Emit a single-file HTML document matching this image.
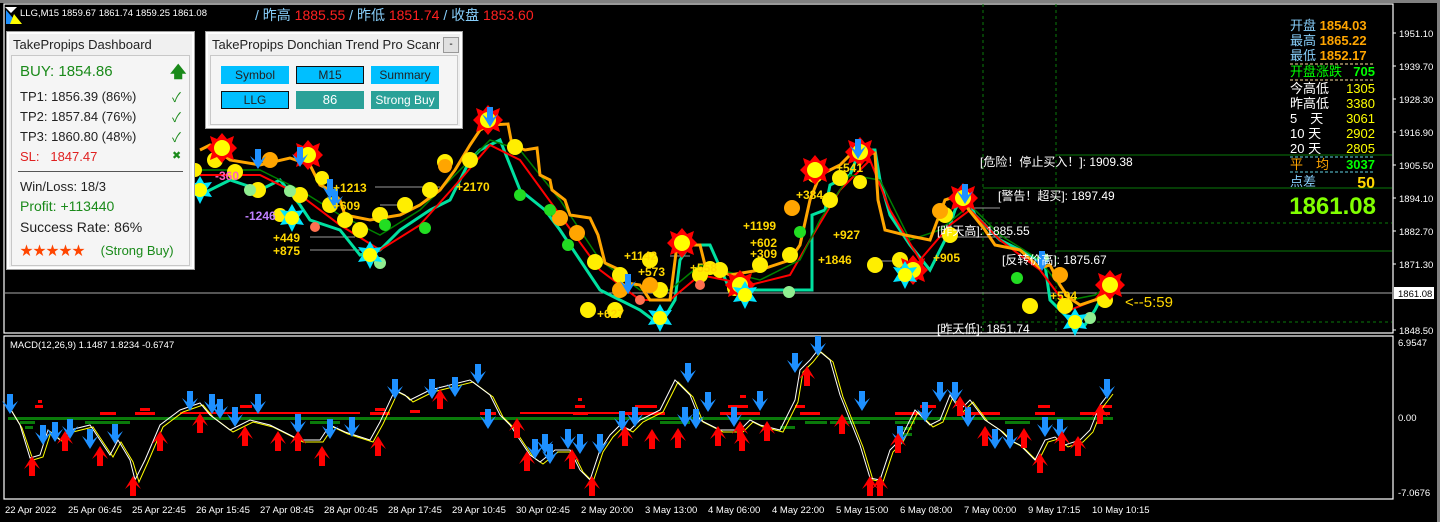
<!DOCTYPE html>
<html><head><meta charset="utf-8"><style>
html,body{margin:0;padding:0;background:#000;width:1440px;height:522px;overflow:hidden}
body{position:relative;font-family:"Liberation Sans","Noto Sans CJK SC",sans-serif}
svg{position:absolute;left:0;top:0}
.panel{position:absolute;background:#f0f0f0;border:1px solid #a0a0a0;box-shadow:inset 0 0 0 2px #fff}
.dash{left:6px;top:31px;width:187px;height:237px}
.dash .t{position:absolute;left:6px;top:5px;font-size:13px;color:#222}
.dash .in{position:absolute;left:4px;top:23px;width:177px;height:209px;border:1px solid #c8c8c8;background:#f5f5f5}
.row{position:absolute;left:8px;font-size:13px;color:#222;white-space:nowrap}
.scan{left:205px;top:31px;width:256px;height:96px}
.scan .t{position:absolute;left:6px;top:5px;font-size:13px;color:#222;white-space:nowrap;width:228px;overflow:hidden}
.scan .min{position:absolute;left:237px;top:5px;width:14px;height:14px;background:#e0e0e0;border:1px solid #999;font-size:10px;text-align:center;line-height:13px}
.scan .in{position:absolute;left:4px;top:23px;width:246px;height:68px;border:1px solid #c8c8c8;background:#f5f5f5}
.b{position:absolute;width:68px;height:18px;font-size:12px;text-align:center;line-height:18px;color:#222;background:#00bfff}
.g{background:#2aa198;color:#fff}
.k{border:1px solid #111;width:66px;height:16px;line-height:16px}
</style></head><body>
<svg width="1440" height="522" viewBox="0 0 1440 522" font-family="Liberation Sans, Noto Sans CJK SC, sans-serif">
<defs>
<g id="dn"><polygon points="-3,-11 3,-11 3,0 8,-4 0,9 -8,-4 -3,0" fill="#1e90ff"/></g>
<g id="up"><polygon points="-3,11 3,11 3,0 8,4 0,-9 -8,4 -3,0" fill="#ff0000"/></g>
<g id="sun"><polygon points="0,-15 5,-9 12,-12 10,-5 15,0 10,5 12,12 5,9 0,15 -5,9 -12,12 -10,5 -15,0 -10,-5 -12,-12 -5,-9" fill="#f00"/><circle r="8" fill="#ff0"/></g>
<g id="star"><polygon points="0,-14 4,-7 12,-8 7,-1 12,7 4,6 0,14 -4,6 -12,7 -7,-1 -12,-8 -4,-7" fill="#00e5ff"/><circle r="7" fill="#ff0"/></g>
</defs>
<rect x="0" y="0" width="1440" height="3" fill="#808080"/>
<rect x="1437" y="0" width="3" height="522" fill="#808080"/>
<rect x="4" y="4" width="1389" height="329" fill="none" stroke="#fff" stroke-width="1.2"/>
<rect x="4" y="336" width="1389" height="163" fill="none" stroke="#fff" stroke-width="1.2"/>
<line x1="983" y1="4" x2="983" y2="333" stroke="#0a7a0a" stroke-dasharray="3,3"/>
<line x1="1056" y1="4" x2="1056" y2="333" stroke="#0a7a0a" stroke-dasharray="3,3"/>
<line x1="1056" y1="155" x2="1392" y2="155" stroke="#0a7a0a"/>
<line x1="983" y1="188" x2="1392" y2="188" stroke="#0a7a0a"/>
<line x1="983" y1="223" x2="1392" y2="223" stroke="#0a7a0a" stroke-dasharray="3,3"/>
<line x1="1056" y1="251" x2="1392" y2="251" stroke="#0a7a0a"/>
<line x1="983" y1="322" x2="1392" y2="322" stroke="#0a7a0a" stroke-dasharray="3,3"/>
<line x1="5" y1="293" x2="1392" y2="293" stroke="#aaa"/>
<g stroke="#999"><line x1="375" y1="187" x2="440" y2="187"/><line x1="380" y1="205" x2="410" y2="205"/><line x1="310" y1="237" x2="355" y2="237"/><line x1="310" y1="250" x2="380" y2="250"/><line x1="670" y1="256" x2="690" y2="256"/><line x1="870" y1="261" x2="900" y2="261"/><line x1="960" y1="208" x2="1000" y2="208"/><line x1="940" y1="237" x2="1010" y2="237"/></g>
<polyline fill="none" stroke="#00e0a0" stroke-width="3" points="180,190 200,195 230,180 260,190 280,180 300,205 310,220 340,230 360,255 380,250 400,230 430,210 450,200 470,160 480,150 500,140 520,190 545,210 560,230 580,260 600,290 620,300 640,310 660,325 675,300 680,260 690,245 710,245 730,290 760,290 790,290 812,290 812,215 825,210 830,185 850,175 860,150 875,150 880,180 890,215 910,245 930,270 945,240 955,210 965,190 975,215 1000,240 1030,255 1045,265 1050,300 1070,320 1085,325 1095,310 1105,290 1110,280"/>
<polyline fill="none" stroke="#f00" stroke-width="2" points="200,175 260,175 300,195 340,225 380,250 420,225 460,180 490,145 520,160 560,215 600,270 640,300 670,300 700,275 750,285 790,275 810,240 840,190 870,160 890,210 920,260 950,225 970,210 1000,240 1040,270 1070,310 1095,300 1110,280"/>
<polyline fill="none" stroke="#008000" stroke-width="1.5" points="200,170 260,170 300,190 340,215 380,235 420,210 460,170 490,140 520,150 560,200 600,260 640,290 670,290 700,265 760,280 800,260 820,220 850,175 880,180 910,240 940,230 970,205 1000,235 1040,260 1070,300 1095,295 1110,285"/>
<polyline fill="none" stroke="#ffa500" stroke-width="3" points="200,150 210,145 230,160 260,165 290,158 310,165 320,185 330,190 340,200 345,215 370,220 400,215 420,205 440,190 455,170 470,145 480,130 490,125 508,124 512,145 525,150 537,148 540,175 550,180 552,190 565,200 570,215 590,218 598,235 605,263 620,270 627,283 640,285 650,300 670,300 677,245 700,245 705,265 730,275 760,270 790,260 800,245 810,200 820,175 830,170 840,165 850,155 875,153 878,200 885,230 905,235 930,240 945,200 960,195 965,205 985,230 995,245 1020,250 1040,268 1050,265 1060,285 1068,297 1080,305 1095,300 1105,298"/>
<g fill="#ffee00">
<circle cx="215" cy="160" r="8"/><circle cx="235" cy="172" r="8"/><circle cx="258" cy="190" r="8"/><circle cx="300" cy="195" r="8"/><circle cx="330" cy="205" r="8"/><circle cx="345" cy="220" r="8"/><circle cx="360" cy="230" r="8"/><circle cx="380" cy="215" r="8"/><circle cx="405" cy="205" r="8"/><circle cx="430" cy="190" r="8"/><circle cx="445" cy="162" r="8"/><circle cx="470" cy="160" r="8"/><circle cx="515" cy="147" r="8"/><circle cx="595" cy="262" r="8"/><circle cx="588" cy="310" r="8"/><circle cx="620" cy="275" r="8"/><circle cx="650" cy="260" r="8"/><circle cx="700" cy="275" r="8"/><circle cx="720" cy="270" r="8"/><circle cx="735" cy="288" r="8"/><circle cx="760" cy="265" r="8"/><circle cx="790" cy="255" r="8"/><circle cx="815" cy="175" r="8"/><circle cx="840" cy="178" r="8"/><circle cx="830" cy="200" r="8"/><circle cx="875" cy="265" r="8"/><circle cx="900" cy="260" r="8"/><circle cx="945" cy="215" r="8"/><circle cx="950" cy="235" r="8"/><circle cx="1030" cy="306" r="8"/><circle cx="1105" cy="300" r="8"/><circle cx="1065" cy="306" r="8"/><circle cx="615" cy="310" r="8"/><circle cx="660" cy="290" r="8"/><circle cx="322" cy="178" r="7"/><circle cx="195" cy="170" r="7"/><circle cx="280" cy="215" r="7"/><circle cx="710" cy="268" r="7"/><circle cx="860" cy="182" r="7"/>
</g>
<g fill="#ffa500"><circle cx="270" cy="160" r="8"/><circle cx="560" cy="218" r="8"/><circle cx="577" cy="233" r="8"/><circle cx="620" cy="290" r="8"/><circle cx="650" cy="285" r="8"/><circle cx="792" cy="208" r="8"/><circle cx="1060" cy="275" r="8"/><circle cx="940" cy="211" r="8"/><circle cx="445" cy="166" r="7"/></g>
<g fill="#22dd22"><circle cx="520" cy="195" r="6"/><circle cx="550" cy="210" r="6"/><circle cx="568" cy="245" r="6"/><circle cx="800" cy="232" r="6"/><circle cx="1017" cy="278" r="6"/><circle cx="385" cy="225" r="6"/><circle cx="425" cy="228" r="6"/></g>
<g fill="#90ee90"><circle cx="290" cy="191" r="6"/><circle cx="250" cy="190" r="6"/><circle cx="789" cy="292" r="6"/><circle cx="1090" cy="318" r="6"/><circle cx="380" cy="263" r="6"/><circle cx="1043" cy="259" r="6"/></g>
<g fill="#ff7050"><circle cx="315" cy="227" r="5"/><circle cx="640" cy="300" r="5"/><circle cx="700" cy="285" r="5"/></g>
<use href="#sun" x="488" y="120"/><use href="#sun" x="682" y="243"/><use href="#sun" x="815" y="170"/><use href="#sun" x="860" y="152"/><use href="#sun" x="963" y="198"/><use href="#sun" x="1110" y="285"/><use href="#sun" x="222" y="148"/><use href="#sun" x="308" y="155"/><use href="#sun" x="913" y="270"/><use href="#sun" x="740" y="285"/>
<use href="#star" x="370" y="255"/><use href="#star" x="200" y="190"/><use href="#star" x="660" y="318"/><use href="#star" x="745" y="295"/><use href="#star" x="1075" y="322"/><use href="#star" x="905" y="275"/><use href="#star" x="292" y="218"/>
<use href="#dn" x="490" y="118"/><use href="#dn" x="258" y="160"/><use href="#dn" x="300" y="158"/><use href="#dn" x="330" y="190"/><use href="#dn" x="628" y="285"/><use href="#dn" x="858" y="150"/><use href="#dn" x="965" y="195"/><use href="#dn" x="1042" y="262"/><use href="#dn" x="335" y="200"/>
<g font-size="12" font-weight="bold" fill="#ffd700">
<text x="333" y="192">+1213</text><text x="333" y="210">+609</text><text x="273" y="242">+449</text><text x="273" y="255">+875</text><text x="456" y="191">+2170</text><text x="624" y="260">+1142</text><text x="638" y="276">+573</text><text x="597" y="318">+627</text><text x="743" y="230">+1199</text><text x="750" y="247">+602</text><text x="750" y="258">+309</text><text x="818" y="264">+1846</text><text x="833" y="239">+927</text><text x="796" y="199">+384</text><text x="933" y="262">+905</text><text x="1050" y="300">+594</text><text x="690" y="272">+558</text><text x="836" y="172">+541</text>
</g>
<text x="245" y="220" font-size="12" font-weight="bold" fill="#c080ff">-1246</text>
<text x="215" y="180" font-size="12" font-weight="bold" fill="#ff60c0">-360</text>
<g font-size="12" fill="#fff"><text x="980" y="166">[危险！停止买入！]: 1909.38</text><text x="998" y="200">[警告！超买]: 1897.49</text><text x="937" y="235">[昨天高]: 1885.55</text><text x="1002" y="264">[反转价高]: 1875.67</text><text x="937" y="333">[昨天低]: 1851.74</text></g>
<text x="1125" y="307" font-size="15" fill="#ffd700">&lt;--5:59</text>
<polygon points="5,7 17,7 11,13" fill="#fff"/><polygon points="6,10 18,24 6,24" fill="#1e90ff"/><polygon points="14,14 22,24 10,24" fill="#ff0"/>
<text x="20" y="16" font-size="9.5" fill="#fff">LLG,M15  1859.67 1861.74 1859.25 1861.08</text>
<text x="255" y="20" font-size="14" fill="#87cefa">/ 昨高 <tspan fill="#ff2020">1885.55</tspan> / 昨低 <tspan fill="#ff2020">1851.74</tspan> / 收盘 <tspan fill="#ff2020">1853.60</tspan></text>
<g font-size="13"><text x="1290" y="30" fill="#87cefa">开盘 <tspan fill="#ffa500" font-weight="bold">1854.03</tspan></text>
<text x="1290" y="45" fill="#87cefa">最高 <tspan fill="#ffa500" font-weight="bold">1865.22</tspan></text>
<text x="1290" y="60" fill="#87cefa">最低 <tspan fill="#ffa500" font-weight="bold">1852.17</tspan></text>
<line x1="1290" y1="64" x2="1375" y2="64" stroke="#ffe0a0" stroke-dasharray="3,2"/>
<text x="1290" y="76" fill="#00ff00">开盘涨跌</text><text x="1375" y="76" fill="#00ff00" font-weight="bold" text-anchor="end">705</text>
<line x1="1290" y1="80" x2="1375" y2="80" stroke="#ffe0a0" stroke-dasharray="3,2"/>
<g fill="#fff"><text x="1290" y="93">今高低</text><text x="1290" y="108">昨高低</text><text x="1290" y="123">5　天</text><text x="1290" y="138">10 天</text><text x="1290" y="153">20 天</text></g>
<g fill="#ffff00" text-anchor="end"><text x="1375" y="93">1305</text><text x="1375" y="108">3380</text><text x="1375" y="123">3061</text><text x="1375" y="138">2902</text><text x="1375" y="153">2805</text></g>
<line x1="1290" y1="157" x2="1375" y2="157" stroke="#5fd0e0" stroke-dasharray="3,2"/>
<text x="1290" y="169" fill="#ffa500">平　均</text><text x="1375" y="169" fill="#00ff00" font-weight="bold" text-anchor="end">3037</text>
<line x1="1290" y1="172" x2="1375" y2="172" stroke="#5fd0e0" stroke-dasharray="3,2"/>
<text x="1290" y="186" fill="#87cefa">点差</text><text x="1375" y="188" fill="#ffd700" font-weight="bold" font-size="16" text-anchor="end">50</text></g>
<text x="1376" y="214" font-size="24" font-weight="bold" fill="#80ff00" text-anchor="end">1861.08</text>
<g font-size="9.5" fill="#fff"><text x="1399" y="37">1951.10</text><text x="1399" y="70">1939.70</text><text x="1399" y="103">1928.30</text><text x="1399" y="136">1916.90</text><text x="1399" y="169">1905.50</text><text x="1399" y="202">1894.10</text><text x="1399" y="235">1882.70</text><text x="1399" y="268">1871.30</text><text x="1399" y="334">1848.50</text><text x="1398" y="346">6.9547</text><text x="1398" y="421">0.00</text><text x="1398" y="496">-7.0676</text></g>
<g stroke="#fff"><line x1="1393" y1="33" x2="1396" y2="33"/><line x1="1393" y1="66" x2="1396" y2="66"/><line x1="1393" y1="99" x2="1396" y2="99"/><line x1="1393" y1="132" x2="1396" y2="132"/><line x1="1393" y1="165" x2="1396" y2="165"/><line x1="1393" y1="198" x2="1396" y2="198"/><line x1="1393" y1="231" x2="1396" y2="231"/><line x1="1393" y1="264" x2="1396" y2="264"/><line x1="1393" y1="330" x2="1396" y2="330"/></g>
<rect x="1394" y="287" width="40" height="12" fill="#fff"/><text x="1398" y="297" font-size="9.5" fill="#000">1861.08</text>
<text x="10" y="348" font-size="9.5" fill="#fff">MACD(12,26,9) 1.1487 1.8234 -0.6747</text>
<g fill="#f00"><rect x="35" y="405" width="8" height="3"/><rect x="38" y="400" width="4" height="3"/><rect x="100" y="412" width="16" height="3"/><rect x="135" y="412" width="20" height="3"/><rect x="140" y="408" width="10" height="3"/><rect x="240" y="405" width="12" height="3"/><rect x="370" y="412" width="20" height="3"/><rect x="375" y="408" width="10" height="3"/><rect x="410" y="410" width="10" height="3"/><rect x="480" y="412" width="16" height="3"/><rect x="573" y="412" width="15" height="3"/><rect x="575" y="405" width="10" height="3"/><rect x="578" y="398" width="4" height="3"/><rect x="625" y="412" width="40" height="3"/><rect x="635" y="405" width="22" height="3"/><rect x="720" y="412" width="40" height="3"/><rect x="728" y="405" width="20" height="3"/><rect x="740" y="395" width="6" height="3"/><rect x="800" y="412" width="20" height="3"/><rect x="795" y="405" width="10" height="3"/><rect x="895" y="412" width="30" height="3"/><rect x="920" y="405" width="16" height="3"/><rect x="960" y="412" width="40" height="3"/><rect x="1035" y="412" width="20" height="3"/><rect x="1038" y="405" width="12" height="3"/><rect x="1080" y="412" width="30" height="3"/><rect x="1100" y="405" width="12" height="3"/><rect x="180" y="412" width="180" height="2"/><rect x="520" y="412" width="100" height="2"/></g>
<g fill="#0a7a0a"><rect x="8" y="417" width="1105" height="3"/><rect x="20" y="421" width="15" height="3"/><rect x="25" y="426" width="8" height="3"/><rect x="85" y="421" width="45" height="3"/><rect x="310" y="421" width="30" height="3"/><rect x="660" y="421" width="30" height="3"/><rect x="805" y="421" width="22" height="3"/><rect x="830" y="421" width="40" height="3"/><rect x="780" y="426" width="15" height="3"/><rect x="895" y="421" width="20" height="3"/><rect x="898" y="427" width="14" height="3"/><rect x="900" y="433" width="12" height="3"/><rect x="1005" y="421" width="25" height="3"/></g>
<polyline fill="none" stroke="#ff0" stroke-width="1" points="10,408 22,428 33,460 43,457 51,432 63,442 73,432 93,427 103,442 113,457 121,442 133,462 139,482 148,462 163,427 183,412 203,405 213,417 233,432 253,422 273,427 293,437 303,442 323,442 333,427 348,434 373,442 383,424 398,392 408,397 413,402 433,392 453,387 473,382 493,397 503,417 513,427 523,442 533,457 543,464 558,452 573,452 583,472 593,482 603,452 613,437 623,427 633,432 643,422 663,412 678,382 693,397 703,422 723,432 743,432 753,422 763,427 783,432 798,402 803,372 813,362 821,352 833,362 843,397 853,422 863,447 873,480 883,482 893,452 903,442 918,412 933,427 943,422 953,397 963,412 973,402 988,422 1003,432 1013,442 1023,447 1038,462 1048,442 1058,439 1068,447 1083,442 1093,432 1103,407 1113,394"/>
<polyline fill="none" stroke="#fff" stroke-width="1" points="8,405 20,425 30,458 40,455 48,430 60,440 70,430 90,425 100,440 110,455 118,440 130,460 135,480 145,460 160,425 180,410 200,403 210,415 230,430 250,420 270,425 290,435 300,440 320,440 330,425 345,432 370,440 380,422 395,390 405,395 410,400 430,390 450,385 470,380 490,395 500,415 510,425 520,440 530,455 540,462 555,450 570,450 580,470 590,480 600,450 610,435 620,425 630,430 640,420 660,410 675,380 690,395 700,420 720,430 740,430 750,420 760,425 780,430 795,400 800,370 810,360 818,350 830,360 840,395 850,420 860,445 870,478 880,480 890,450 900,440 915,410 930,425 940,420 950,395 960,410 970,400 985,420 1000,430 1010,440 1020,445 1035,460 1045,440 1055,437 1065,445 1080,440 1090,430 1100,405 1110,392"/>
<g>
<use href="#dn" x="10" y="405"/><use href="#dn" x="43" y="436"/><use href="#dn" x="55" y="433"/><use href="#dn" x="70" y="430"/><use href="#dn" x="90" y="440"/><use href="#dn" x="115" y="435"/><use href="#dn" x="190" y="402"/><use href="#dn" x="212" y="405"/><use href="#dn" x="220" y="410"/><use href="#dn" x="235" y="418"/><use href="#dn" x="258" y="405"/><use href="#dn" x="298" y="425"/><use href="#dn" x="330" y="430"/><use href="#dn" x="352" y="428"/><use href="#dn" x="395" y="390"/><use href="#dn" x="432" y="390"/><use href="#dn" x="455" y="388"/><use href="#dn" x="478" y="375"/><use href="#dn" x="488" y="420"/><use href="#dn" x="535" y="450"/><use href="#dn" x="550" y="455"/><use href="#dn" x="545" y="445"/><use href="#dn" x="568" y="440"/><use href="#dn" x="580" y="445"/><use href="#dn" x="600" y="445"/><use href="#dn" x="622" y="422"/><use href="#dn" x="635" y="418"/><use href="#dn" x="688" y="374"/><use href="#dn" x="708" y="403"/><use href="#dn" x="685" y="418"/><use href="#dn" x="696" y="420"/><use href="#dn" x="734" y="418"/><use href="#dn" x="760" y="402"/><use href="#dn" x="795" y="364"/><use href="#dn" x="818" y="347"/><use href="#dn" x="900" y="437"/><use href="#dn" x="862" y="402"/><use href="#dn" x="925" y="413"/><use href="#dn" x="940" y="393"/><use href="#dn" x="955" y="393"/><use href="#dn" x="968" y="418"/><use href="#dn" x="995" y="440"/><use href="#dn" x="1010" y="440"/><use href="#dn" x="1045" y="428"/><use href="#dn" x="1060" y="430"/><use href="#dn" x="1107" y="390"/>
<use href="#up" x="32" y="465"/><use href="#up" x="65" y="440"/><use href="#up" x="100" y="455"/><use href="#up" x="133" y="485"/><use href="#up" x="160" y="440"/><use href="#up" x="200" y="422"/><use href="#up" x="245" y="435"/><use href="#up" x="278" y="440"/><use href="#up" x="298" y="440"/><use href="#up" x="322" y="455"/><use href="#up" x="378" y="445"/><use href="#up" x="440" y="398"/><use href="#up" x="517" y="427"/><use href="#up" x="527" y="460"/><use href="#up" x="572" y="458"/><use href="#up" x="592" y="485"/><use href="#up" x="625" y="435"/><use href="#up" x="652" y="438"/><use href="#up" x="678" y="437"/><use href="#up" x="718" y="435"/><use href="#up" x="740" y="430"/><use href="#up" x="742" y="440"/><use href="#up" x="767" y="430"/><use href="#up" x="807" y="375"/><use href="#up" x="842" y="423"/><use href="#up" x="870" y="485"/><use href="#up" x="898" y="442"/><use href="#up" x="880" y="485"/><use href="#up" x="985" y="435"/><use href="#up" x="1024" y="437"/><use href="#up" x="1040" y="462"/><use href="#up" x="1062" y="440"/><use href="#up" x="1078" y="445"/><use href="#up" x="1100" y="413"/><use href="#up" x="960" y="405"/>
</g>
<g font-size="9.5" fill="#fff"><text x="5" y="513">22 Apr 2022</text><text x="68" y="513">25 Apr 06:45</text><text x="132" y="513">25 Apr 22:45</text><text x="196" y="513">26 Apr 15:45</text><text x="260" y="513">27 Apr 08:45</text><text x="324" y="513">28 Apr 00:45</text><text x="388" y="513">28 Apr 17:45</text><text x="452" y="513">29 Apr 10:45</text><text x="516" y="513">30 Apr 02:45</text><text x="581" y="513">2 May 20:00</text><text x="645" y="513">3 May 13:00</text><text x="708" y="513">4 May 06:00</text><text x="772" y="513">4 May 22:00</text><text x="836" y="513">5 May 15:00</text><text x="900" y="513">6 May 08:00</text><text x="964" y="513">7 May 00:00</text><text x="1028" y="513">9 May 17:15</text><text x="1092" y="513">10 May 10:15</text></g>
</svg>
<div class="panel dash"><div class="t">TakePropips Dashboard</div><div class="in">
<div class="row" style="top:7px;font-size:15px;color:#1a8a1a">BUY: 1854.86</div><div class="row" style="left:158px;top:5px;font-size:16px;color:#1a8a1a;font-weight:bold">🡅</div>
<div class="row" style="top:33px">TP1: 1856.39 (86%)</div><div class="row" style="left:160px;top:31px;color:#1a8a1a">✓</div>
<div class="row" style="top:53px">TP2: 1857.84 (76%)</div><div class="row" style="left:160px;top:51px;color:#1a8a1a">✓</div>
<div class="row" style="top:73px">TP3: 1860.80 (48%)</div><div class="row" style="left:160px;top:71px;color:#1a8a1a">✓</div>
<div class="row" style="top:93px;color:#e02020">SL:&nbsp;&nbsp; 1847.47</div><div class="row" style="left:160px;top:93px;color:#1a8a1a;font-size:11px">✖</div>
<div style="position:absolute;left:6px;top:115px;width:165px;height:1px;background:#555"></div>
<div class="row" style="top:123px">Win/Loss: 18/3</div>
<div class="row" style="top:142px;font-size:14px;color:#1a8a1a">Profit: +113440</div>
<div class="row" style="top:163px;font-size:14px">Success Rate: 86%</div>
<div class="row" style="top:184px;color:#ff4500">★★★★★ <span style="color:#1a8a1a;margin-left:12px">(Strong Buy)</span></div>
</div></div>
<div class="panel scan"><div class="t">TakePropips Donchian Trend Pro Scanner</div><div class="min">-</div><div class="in">
<div class="b" style="left:10px;top:10px">Symbol</div><div class="b k" style="left:85px;top:10px">M15</div><div class="b" style="left:160px;top:10px">Summary</div>
<div class="b k" style="left:10px;top:35px">LLG</div><div class="b g" style="left:85px;top:35px;font-size:13px">86</div><div class="b g" style="left:160px;top:35px">Strong Buy</div>
</div></div>
</body></html>
